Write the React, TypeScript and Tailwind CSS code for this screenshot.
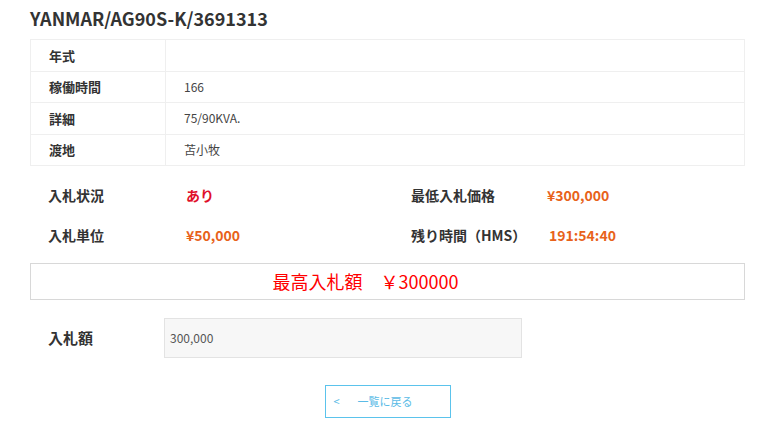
import React from 'react';

const specs = [
  { label: '年式', value: '' },
  { label: '稼働時間', value: '166' },
  { label: '詳細', value: '75/90KVA.' },
  { label: '渡地', value: '苫小牧' },
];

const App = () => {
  return (
    <div className="w-[769px] h-[432px] bg-white text-[#333] font-['Noto_Sans_CJK_JP','Noto_Sans',sans-serif] overflow-hidden">
      <div className="ml-[30px] w-[715px] pt-[5px]">
        <h1 className="text-[18px] font-bold leading-[26px] text-[#333]">YANMAR/AG90S-K/3691313</h1>

        <table className="mt-[8px] w-full border-collapse text-[13px]">
          <tbody>
            {specs.map((row) => (
              <tr key={row.label} className="h-[31.5px]">
                <th className="w-[135px] border border-[#efefef] pl-[18px] text-left font-bold">{row.label}</th>
                <td className="border border-[#efefef] pl-[18px] text-[12px] text-[#444]">{row.value}</td>
              </tr>
            ))}
          </tbody>
        </table>

        <div className="mt-[19px] grid grid-cols-[138px_225px_136px_1fr] gap-y-[19px] pl-[18px] text-[14px] font-bold leading-[21px]">
          <div>入札状況</div>
          <div className="text-[#e0102a]">あり</div>
          <div>最低入札価格</div>
          <div className="text-[#e8621a]">¥300,000</div>
          <div>入札単位</div>
          <div className="text-[#e8621a]">¥50,000</div>
          <div>残り時間（HMS）</div>
          <div className="pl-[2px] text-[#e8621a]">191:54:40</div>
        </div>

        <div className="mt-[17px] flex h-[37px] items-center justify-center border border-[#d8d8d8] pr-[44px] text-[18px] text-[#f00]">
          最高入札額　￥300000
        </div>

        <div className="mt-[18px] flex items-center">
          <div className="w-[134px] pl-[18px] text-[15px] font-bold">入札額</div>
          <div className="flex h-[40px] w-[358px] items-center border border-[#e3e3e3] bg-[#f7f7f7] pl-[5px] text-[12px] text-[#555]">
            300,000
          </div>
        </div>

        <div className="mt-[27px] flex justify-center">
          <button className="flex h-[33px] w-[126px] items-center border border-[#5bc3ec] pl-[8px] text-[11px] text-[#5bbbe6]">
            <span className="w-[24px] text-left">&lt;</span>
            <span>一覧に戻る</span>
          </button>
        </div>
      </div>
    </div>
  );
};

export default App;
